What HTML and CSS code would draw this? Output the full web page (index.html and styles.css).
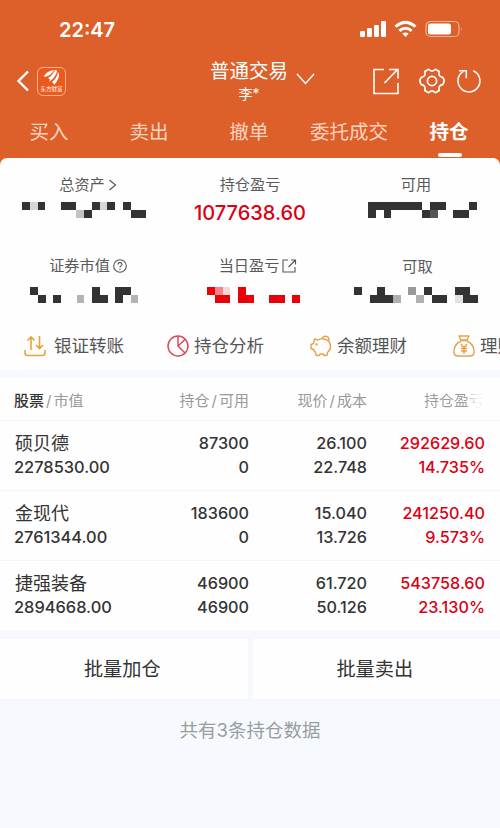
FILE: index.html
```html
<!DOCTYPE html>
<html lang="zh-CN">
<head>
    <meta charset="UTF-8" />
    <meta name="viewport" content="width=device-width, initial-scale=1.0" />
    <title>普通交易 - 持仓</title>
    <link rel="stylesheet" href="styles.css">
</head>
<body>

<header>
    <div class="status-bar">
        <span class="time">22:47</span>
        <svg class="status-icons" width="104" height="20" viewBox="0 0 104 20" fill="#fff">
            <rect x="0" y="11" width="5" height="6" rx="1.2"/>
            <rect x="7" y="8" width="5" height="9" rx="1.2"/>
            <rect x="14" y="5" width="5" height="12" rx="1.2"/>
            <rect x="21" y="1" width="5" height="16" rx="1.2"/>
            <g fill="none" stroke="#fff" stroke-width="3">
                <path d="M35.5 6.7q10-8.6 20 0"/>
                <path d="M39.3 10.8q6.2-5.2 12.4 0"/>
            </g>
            <path d="M42.3 13.6q3.2-2.2 6.4 0l-3.2 3.3z"/>
            <rect x="66" y="1.5" width="33" height="15" rx="4.5" fill="none" stroke="#f3b394" stroke-width="1.2"/>
            <rect x="68" y="3.5" width="23" height="11" rx="2.5"/>
            <path d="M101 7v4q1.6-2 0-4" fill="#f3b394"/>
        </svg>
    </div>
    <div class="title-bar">
        <div class="title-left">
            <svg width="14" height="22" viewBox="0 0 14 22" fill="none" stroke="#fff" stroke-width="2.4"><path d="M12 1.5L2.5 11l9.5 9.5"/></svg>
            <div class="app-logo">
                <svg width="18" height="15" viewBox="0 0 18 15" fill="#fff">
                    <path d="M1 6Q4 1 11 0Q9 5 2 7z"/>
                    <path d="M5 8Q10 5 12 0q2 0 2 1Q13 7 6 12q2-3-1-4z"/>
                    <path d="M9 12q5-4 6-10q2 3 0 7q-1 3-4 6q0-2-2-3z"/>
                </svg>
                <span>东方财富</span>
            </div>
        </div>
        <div class="title-center">
            <div class="account">
                <h1>普通交易</h1>
                <p>李*</p>
            </div>
            <svg class="arrow-down" width="19" height="12" viewBox="0 0 19 12" fill="none" stroke="#fff" stroke-width="1.5"><path d="M1 1l8.5 9.5L18 1"/></svg>
        </div>
        <div class="title-right">
            <svg width="26" height="27" viewBox="0 0 26 27" fill="none" stroke="#fff" stroke-width="1.6">
                <path d="M11 1.5H1v24h24V15"/><path d="M11.5 15L24.5 1.5M16 1.5h9v9"/>
            </svg>
            <svg class="gear" width="26" height="26" viewBox="0 0 26 26" fill="none" stroke="#fff" stroke-width="1.7" stroke-linejoin="round">
                <path d="M9.8 1.3Q13 5 16.2 1.3L20.3 3.6Q18.7 8.4 23.6 9.3Q26.5 13 23.6 16.7Q18.7 17.6 20.3 22.4L16.2 24.7Q13 21 9.8 24.7L5.7 22.4Q7.3 17.6 2.4 16.7Q-.5 13 2.4 9.3Q7.3 8.4 5.7 3.6z"/>
                <circle cx="13" cy="13" r="4.6"/>
            </svg>
            <svg class="refresh" width="24" height="24" viewBox="0 0 24 24" fill="none" stroke="#fff" stroke-width="1.5">
                <path d="M16.2 1.8a11 11 0 1 1-9.7.6"/><path d="M2 1.8h7.3v7.5"/>
            </svg>
        </div>
    </div>
    <nav class="tabs">
        <a>买入</a>
        <a>卖出</a>
        <a>撤单</a>
        <a>委托成交</a>
        <a class="active">持仓</a>
    </nav>
</header>

<section class="overview">
    <div class="stats">
        <div class="stat">
            <div class="label shift">总资产<svg width="9" height="12" viewBox="0 0 9 12" fill="none" stroke="#555" stroke-width="1.2"><path d="M1.5 1L7.5 6l-6 5"/></svg></div>
            <svg class="mosaic" width="124" height="15.5" viewBox="0 0 16 2" fill="#333">
                <path d="M0 0h1v1H0zM2 0h1v1H2zM5 0h2v1H5zM8 1h1v1H8zM9 0h1v1H9zM11 0h1v1h-1zM13 0h1v1h-1zM14 1h2v1h-2z"/>
                <path fill="#d8d8d8" d="M1 0h1v1H1zM10 0h1v1h-1z"/>
                <path fill="#c3c3c3" d="M7 1h1v1H7z"/>
            </svg>
        </div>
        <div class="stat">
            <div class="label">持仓盈亏</div>
            <div class="profit">1077638.60</div>
        </div>
        <div class="stat">
            <div class="label">可用</div>
            <svg class="mosaic right" width="108.5" height="15.5" viewBox="0 0 14 2" fill="#333">
                <path d="M0 0h7v1H3v1H2V1H1v1H0zM7 1h1v1H7zM8 0h2v1H8zM11 1h2v1h-2zM13 0h1v1h-1z"/>
                <path fill="#555" d="M8 1h1v1H8z"/>
            </svg>
        </div>
        <div class="stat">
            <div class="label mid">证券市值<svg width="14" height="14" viewBox="0 0 14 14" fill="none" stroke="#555" stroke-width="1.1"><circle cx="7" cy="7" r="6.3"/><path d="M5 5.5Q5 3.6 7 3.6T9 5.4Q9 6.5 7.7 7Q7 7.4 7 8.5M7 9.7v1.2"/></svg></div>
            <svg class="mosaic" width="108.5" height="15.5" viewBox="0 0 14 2" fill="#333">
                <path d="M0 0h1v1H0zM1 1h1v1H1zM3 1h1v1H3zM8 0h1v1h1v1H8zM11 0h2v1h-1v1h-1z"/>
                <path fill="#b3b3b3" d="M6 1h1v1H6zM13 1h1v1h-1z"/>
            </svg>
        </div>
        <div class="stat">
            <div class="label wide">当日盈亏<svg width="15" height="14" viewBox="0 0 15 14" fill="none" stroke="#555" stroke-width="1.1"><path d="M6 1H1v12h12V8M6.5 8L13.5 1M9 1h4.5v4.5"/></svg></div>
            <svg class="mosaic day" width="93" height="15.5" viewBox="0 0 12 2" fill="#ea0009">
                <path d="M0 0h1v1H0zM1 1h2v1H1zM4 0h1v1h1v1H4zM8 1h2v1H8zM11 1h1v1h-1z"/>
                <path fill="#f9838b" d="M1 0h1v1H1z"/>
                <path fill="#fcd5d7" d="M2 0h1v1H2z"/>
            </svg>
        </div>
        <div class="stat">
            <div class="label low">可取</div>
            <svg class="mosaic" width="124" height="15.5" viewBox="0 0 16 2" fill="#333">
                <path d="M0 0h1v1H0zM3 0h1v1h1v1H2V1h1zM9 0h1v1H9zM10 1h2v1h-2zM13 0h2v1h1v1h-2V1h-1z"/>
                <path fill="#b0b0b0" d="M5 1h1v1H5zM8 1h1v1H8z"/>
                <path fill="#999" d="M7 0h1v1H7z"/>
                <path fill="#e2e2e2" d="M13 1h1v1h-1z"/>
            </svg>
        </div>
    </div>

    <div class="shortcuts">
        <a>
            <svg width="22" height="22" viewBox="0 0 22 22" fill="none" stroke="#e5a53c" stroke-width="1.6">
                <path d="M1 15v3q0 2.5 2.5 2.5h15q2.5 0 2.5-2.5v-3M7 15V2M3.5 5.5L7 2l3.500 3.500M15.500 1v12.500M12 10l3.500 3.500L19 10"/>
            </svg>
            银证转账
        </a>
        <a>
            <svg width="22" height="22" viewBox="0 0 22 22" fill="none" stroke="#d84b5b" stroke-width="1.5">
                <circle cx="11" cy="11" r="10"/><path d="M11 1v10l7.500 7.500M11 11l7.500-7"/>
            </svg>
            持仓分析
        </a>
        <a>
            <svg width="22" height="22" viewBox="0 0 22 22" fill="none" stroke="#e5a14a" stroke-width="1.4" stroke-linejoin="round">
                <path d="M4.500 4L8 5Q10 3.500 14 4Q20 5 20.500 11Q20.500 15 17.500 17.500L17 20.500H14L13.300 19H10L9.300 20.500H6.300L5.500 17.500L3.500 14.500L1 13.500V9.500L3.500 8.500z"/>
                <path d="M12 4a3.500 3.200 0 1 1 6.500 2"/><circle cx="6.500" cy="9.500" r=".5"/>
            </svg>
            余额理财
        </a>
        <a>
            <svg width="22" height="22" viewBox="0 0 22 22" fill="none" stroke="#e5a14a" stroke-width="1.4" stroke-linejoin="round">
                <path d="M6 1h10l-2 4H8zM7.500 5.500h7M8 6Q1 9 1 17q0 4 4 4h12q4 0 4-4Q21 9 14 6"/>
                <path d="M8 9l3 4 3-4M11 13v6M8 13.500h6M8 16h6"/>
            </svg>
            理财
        </a>
    </div>
</section>

<section class="holdings">
    <div class="row head">
        <div><b>股票</b><i>/</i>市值</div>
        <div>持仓<i>/</i>可用</div>
        <div>现价<i>/</i>成本</div>
        <div class="fade">持仓盈亏</div>
    </div>
    <div class="row">
        <div><span class="name">硕贝德</span>2278530.00</div>
        <div><span>87300</span>0</div>
        <div><span>26.100</span>22.748</div>
        <div class="red"><span>292629.60</span>14.735%</div>
    </div>
    <div class="row">
        <div><span class="name">金现代</span>2761344.00</div>
        <div><span>183600</span>0</div>
        <div><span>15.040</span>13.726</div>
        <div class="red"><span>241250.40</span>9.573%</div>
    </div>
    <div class="row">
        <div><span class="name">捷强装备</span>2894668.00</div>
        <div><span>46900</span>46900</div>
        <div><span>61.720</span>50.126</div>
        <div class="red"><span>543758.60</span>23.130%</div>
    </div>
</section>

<div class="batch">
    <button>批量加仓</button>
    <button>批量卖出</button>
</div>

<footer>共有3条持仓数据</footer>

</body>
</html>
```

FILE: styles.css
```css
* { box-sizing: border-box; }
body {
    margin: 0; height: 828px; overflow: hidden;
    font-family: Inter, 'Noto Sans CJK SC', sans-serif;
    background: #f6faff; color: #333;
}
svg { display: block; flex: none; }
header { background: #dd5f2a; color: white; height: 166px; }
.status-bar {
    height: 56px; padding: 10px 36px 0 59px;
    display: flex; justify-content: space-between; align-items: center;
}
.time { font-size: 20px; font-weight: 600; line-height: 20px; margin-top: -6px; }
.status-icons { margin-top: -7px; }
.title-bar {
    height: 50px; padding: 0 19px 0 16px;
    display: grid; grid-template-columns: 194px 1fr auto; align-items: center;
}
.title-left { display: flex; align-items: center; gap: 7px; }
.app-logo {
    width: 29px; height: 29px; border: 1px solid #f5b592; border-radius: 6px;
    background: #e95a1c; display: flex; flex-direction: column; align-items: center;
    padding-top: 2px;
}
.app-logo span { font-size: 5.5px; line-height: 8px; white-space: nowrap; }
.title-center { display: flex; align-items: center; gap: 8px; }
.account { text-align: center; }
.account h1 { margin: 0; font-size: 19.5px; line-height: 26px; font-weight: normal; }
.account p { margin: 1px 0 1px; font-size: 14px; line-height: 18px; }
.arrow-down { margin-top: -5px; }
.title-right { display: flex; align-items: center; justify-content: flex-end; }
.gear { margin-left: 20px; }
.refresh { margin-left: 12px; }
.tabs { display: flex; margin-left: -1px; }
.tabs a {
    width: 100px; height: 52px; text-align: center;
    font-size: 19.5px; line-height: 53px; color: #fbd3bf;
}
.tabs .active { color: white; font-weight: bold; }
.tabs .active::after {
    content: ''; display: block; width: 24px; height: 4px; margin: -6px auto 0;
    background: white; border-radius: 2px; position: relative; left: 1px;
}

.overview {
    background: #fefefe; border-radius: 7px 7px 0 0; margin-top: -8px;
    height: 212px; position: relative; overflow: hidden;
}
.stats { display: grid; grid-template-columns: 168px 164px 168px; grid-template-rows: 81px 81px; }
.stat { display: flex; flex-direction: column; align-items: center; padding-top: 16px; }
.label {
    display: flex; align-items: center; gap: 3px;
    font-size: 15.2px; line-height: 22px; height: 22px; color: #5a5a5a;
}
.label.shift { margin-left: 8px; }
.label.mid { margin-left: 8px; }
.label.wide { margin-left: 16px; }
.label.low { margin: 1px 0 -1px 3px; }
.mosaic { margin-top: 6px; shape-rendering: crispEdges; }
.mosaic.right { margin-left: 13px; }
.mosaic.day { margin-left: 7px; }
.stat:nth-child(n+4) .mosaic { margin-top: 10px; }
.profit { color: #dc0013; font-size: 20px; line-height: 24px; font-weight: 500; margin-top: 5px; }
.shortcuts { display: flex; gap: 42px; padding: 14px 0 0 24px; width: 600px; }
.shortcuts a {
    display: flex; align-items: center; gap: 8px;
    font-size: 17.5px; line-height: 24px; color: #555; white-space: nowrap;
}
.shortcuts a:nth-child(n+2) { gap: 5px; }
.shortcuts a:nth-child(2) { margin-left: 1px; }
.shortcuts a:nth-child(n+3) { margin-left: 4px; }

.holdings { background: #fefefe; margin-top: 8px; }
.row {
    display: grid; grid-template-columns: 135px 100px 118px 118px;
    height: 70px; padding: 10px 15px 0 14px; border-bottom: 1px solid #f4f4f7;
    font-size: 16.2px; line-height: 24px; font-weight: 500;
}
.row div { text-align: right; }
.row div:first-child { text-align: left; font-size: 16.4px; }
.row span { display: block; }
.row .name { font-size: 18px; font-weight: normal; padding-left: 1px; position: relative; top: 1px; }
.row:last-child { height: 69px; border: 0; }
.row .red { color: #dc0013; }
.row.head {
    height: 43px; padding-top: 11px; color: #999;
    font-size: 15px; font-weight: normal;
}
.row.head div:first-child { font-size: 15px; }
.head b { font-weight: 500; color: #333; }
.head i { font-style: normal; margin: 0 2px; }
.head .fade {
    padding-right: 1px;
    background: linear-gradient(to right, #999 83%, #f2f2f2 93%);
    background-clip: text; color: transparent;
}

.batch { display: flex; gap: 5px; padding: 9px 0 3px; background: #f7f8fd; }
.batch button {
    flex: 1; height: 60px; border: 0; background: #fefefe; color: #333;
    font-family: inherit; font-size: 19.2px; padding: 0 3px 2px 0;
}
footer { text-align: center; padding-top: 15px; font-size: 18.5px; line-height: 26px; color: #9a9da0; }
```
